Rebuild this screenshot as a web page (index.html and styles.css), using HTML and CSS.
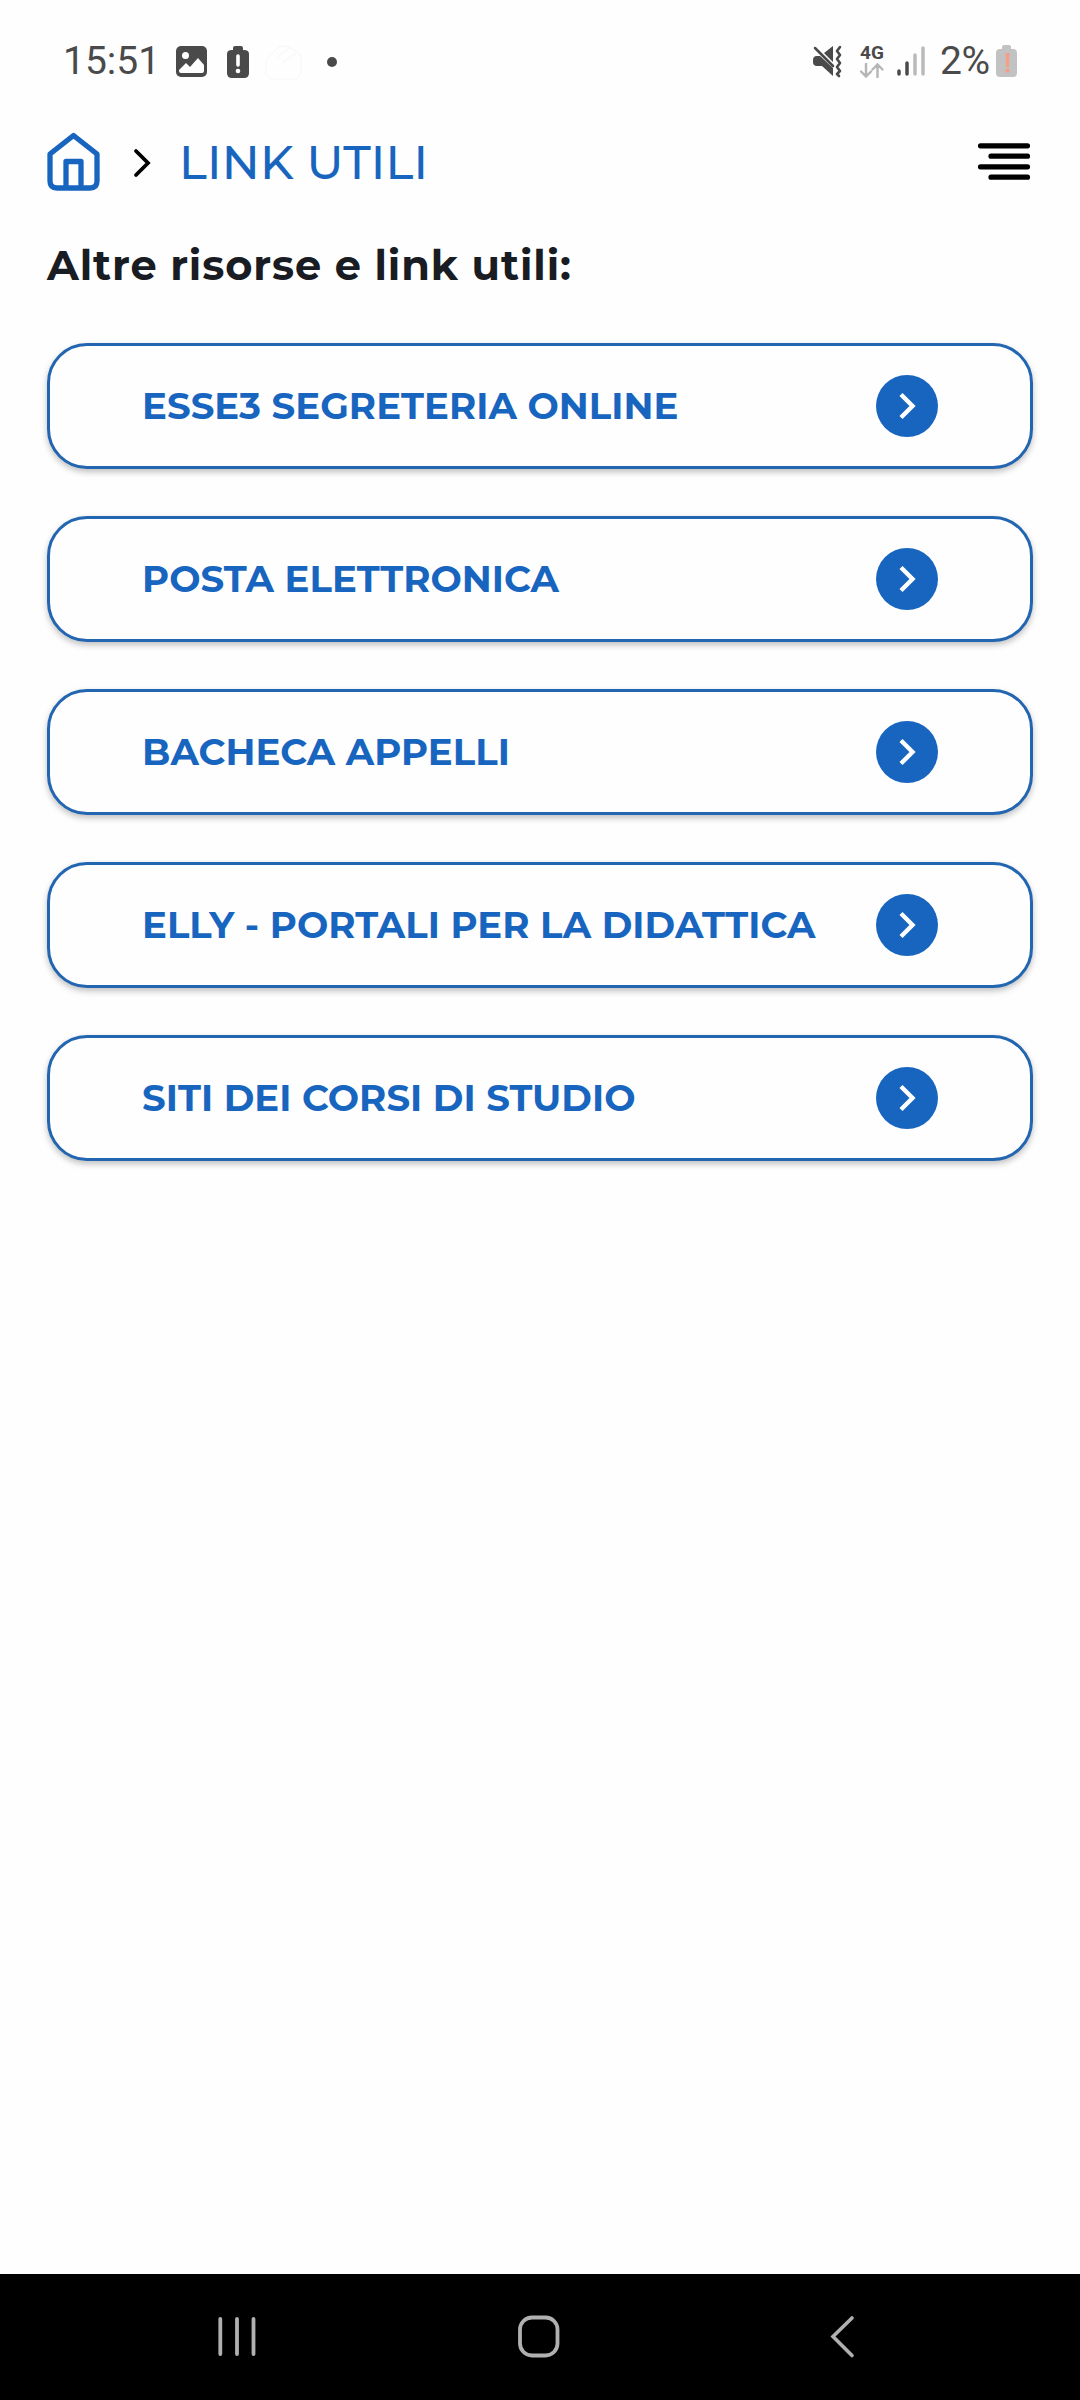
FILE: index.html
```html
<!DOCTYPE html>
<html lang="it">
<head>
    <meta charset="UTF-8">
    <meta name="viewport" content="width=device-width, initial-scale=1.0">
    <title>Link utili</title>
    <link rel="stylesheet" href="styles.css">
</head>
<body>
    <div class="status-bar">
        <span class="clock">15:51</span>
        <svg class="notifications" width="180" height="40" viewBox="0 0 180 40">
            <rect x="1" y="5" width="31" height="31" rx="5" fill="#4a4a4a"/>
            <circle cx="10.5" cy="14.5" r="3.5" fill="#fff"/>
            <path d="M4 29l7-7 4 4 8-9 6 7v6q0 2-2 2H6q-2 0-2-2z" fill="#fff"/>
            <path d="M58 7q0-2 2-2h6q2 0 2 2v2h1q5 0 5 4v19q0 5-5 5H57q-5 0-5-5V13q0-4 5-4h1z" fill="#4a4a4a"/>
            <path d="M63 15v9" stroke="#fff" stroke-width="3.6" stroke-linecap="round"/>
            <circle cx="63" cy="30" r="2.3" fill="#fff"/>
            <path d="M91 19l13-13q6-2 10 0l12 8v19l-5 5H96l-5-5zM101 17l13-10M107 22l14-10" fill="none" stroke="#f3f7f5"/>
            <circle cx="157" cy="21" r="5" fill="#4a4a4a"/>
        </svg>
        <svg class="mute" width="31" height="34" viewBox="0 0 31 34">
            <path d="M12 9l9-7v16zM1 16q0-4 4-4h3l13 12v8L10 22H5q-4 0-4-4z" fill="#4a4a4a"/>
            <path d="M3 4l18 18" stroke="#4a4a4a" stroke-width="2.5" stroke-linecap="round"/>
            <path d="M28 3l-3 4 3 4-3 4 3 4-3 4 3 4-3 3 2 2" fill="none" stroke="#4a4a4a" stroke-width="2.6" stroke-linecap="round" stroke-linejoin="round"/>
        </svg>
        <div class="network">
            <span>4G</span>
            <svg width="24" height="15" viewBox="0 0 24 15">
                <path d="M6 1v12M1 8.5l5 5 5-5M17.5 14V2M12.5 6.5l5-5 5 5" fill="none" stroke="#b5b5b5" stroke-width="2.4" stroke-linecap="round"/>
            </svg>
        </div>
        <svg class="signal" width="28" height="32" viewBox="0 0 28 32">
            <path d="M2 26v3M10 18v11" stroke="#4a4a4a" stroke-width="3.5" stroke-linecap="round"/>
            <path d="M18 10v19M26 3v26" stroke="#bababa" stroke-width="3.5" stroke-linecap="round"/>
        </svg>
        <span class="percent">2%</span>
        <svg class="battery" width="22" height="34" viewBox="0 0 22 34">
            <path d="M6 5V3q0-2 2-2h5q2 0 2 2v2h2q4 0 4 4v20q0 4-4 4H4q-4 0-4-4V9q0-4 4-4z" fill="#c2c2c2"/>
            <path d="M9.500 9h4l-.5 14h-3z" fill="#f4a088"/>
            <circle cx="11.5" cy="26.500" r="2.2" fill="#f4a088"/>
        </svg>
    </div>

    <header class="header">
        <svg class="home-icon" width="54" height="60" viewBox="0 0 54 60">
            <path d="M3 22L26.500 3.500 50 22v27q0 7-7 7H10q-7 0-7-7zM19 56V29.500h15V56" fill="none" stroke="#1865c0" stroke-width="5.3" stroke-linejoin="round"/>
        </svg>
        <svg class="crumb-arrow" width="18" height="30" viewBox="0 0 18 30">
            <path d="M3 3l12 12L3 27" fill="none" stroke="#000" stroke-width="3.8" stroke-linecap="round"/>
        </svg>
        <span class="crumb">LINK UTILI</span>
        <svg class="menu-icon" width="54" height="40" viewBox="0 0 54 40">
            <path d="M3.500 3.800h47M14 14.200h36.500M3.500 24.800h47M14 35.200h36.500" stroke="#000" stroke-width="5.2" stroke-linecap="round"/>
        </svg>
    </header>

    <main>
        <h1>Altre risorse e link utili:</h1>
        <div class="links">
            <a class="link-card">
                <span>ESSE3 SEGRETERIA ONLINE</span>
                <svg width="62" height="62" viewBox="0 0 62 62"><circle cx="31" cy="31" r="31"/><path d="M25 19.5L36.500 31 25 42.5"/></svg>
            </a>
            <a class="link-card">
                <span>POSTA ELETTRONICA</span>
                <svg width="62" height="62" viewBox="0 0 62 62"><circle cx="31" cy="31" r="31"/><path d="M25 19.5L36.500 31 25 42.5"/></svg>
            </a>
            <a class="link-card">
                <span>BACHECA APPELLI</span>
                <svg width="62" height="62" viewBox="0 0 62 62"><circle cx="31" cy="31" r="31"/><path d="M25 19.5L36.500 31 25 42.5"/></svg>
            </a>
            <a class="link-card">
                <span>ELLY - PORTALI PER LA DIDATTICA</span>
                <svg width="62" height="62" viewBox="0 0 62 62"><circle cx="31" cy="31" r="31"/><path d="M25 19.5L36.500 31 25 42.5"/></svg>
            </a>
            <a class="link-card">
                <span>SITI DEI CORSI DI STUDIO</span>
                <svg width="62" height="62" viewBox="0 0 62 62"><circle cx="31" cy="31" r="31"/><path d="M25 19.5L36.500 31 25 42.5"/></svg>
            </a>
        </div>
    </main>

    <nav class="nav-bar">
        <svg width="44" height="44" viewBox="0 0 44 44"><path d="M5.3 4v35M22 4v35M38.500 4v35" stroke-width="3.8"/></svg>
        <svg width="44" height="44" viewBox="0 0 44 44"><rect x="2" y="2.500" width="37.5" height="38" rx="12" stroke-width="3.8"/></svg>
        <svg width="44" height="44" viewBox="0 0 44 44"><path d="M31 3L12 21.500l19 19" stroke-width="3.6"/></svg>
    </nav>
</body>
</html>
```

FILE: styles.css
```css
* {
    box-sizing: border-box;
}

body {
    margin: 0;
    height: 2400px;
    display: flex;
    flex-direction: column;
    background-color: #fefefe;
    font-family: Montserrat, Inter, sans-serif;
}

svg {
    display: block;
    flex-shrink: 0;
}

.status-bar {
    height: 120px;
    padding: 1px 62px 0 63px;
    display: flex;
    align-items: center;
    font-family: Roboto, sans-serif;
    color: #4a4a4a;
}

.clock, .percent {
    font-size: 39px;
    line-height: 40px;
}

.clock {
    width: 112px;
}

.mute {
    margin-left: auto;
    margin-right: 17px;
}

.network {
    width: 25px;
    height: 34px;
    margin-right: 12px;
    display: flex;
    flex-direction: column;
    justify-content: space-between;
}

.network span {
    font-size: 19px;
    font-weight: 700;
    line-height: 17px;
}

.signal {
    margin-right: 15px;
}

.percent {
    width: 56px;
    letter-spacing: -0.4px;
}

.header {
    height: 84px;
    padding: 0 49px 0 47px;
    display: flex;
    align-items: center;
}

.home-icon {
    margin-right: 32px;
}

.crumb-arrow {
    margin-top: 2px;
}

.crumb {
    margin-left: 28px;
    padding-top: 2px;
    font-size: 46.8px;
    line-height: 54px;
    font-weight: 500;
    letter-spacing: 0.2px;
    color: #1865c0;
}

.menu-icon {
    margin-left: auto;
}

main {
    flex: 1;
    padding: 0 47px;
}

h1 {
    margin: 36px 0 53px;
    font-size: 41.5px;
    line-height: 50px;
    font-weight: 700;
    letter-spacing: 0.9px;
    color: #191c22;
}

.links {
    display: flex;
    flex-direction: column;
    gap: 47px;
}

.link-card {
    height: 126px;
    padding: 0 92px;
    display: flex;
    align-items: center;
    justify-content: space-between;
    border: 3px solid #2265b0;
    border-radius: 40px;
    background-color: #fefefe;
    box-shadow: 0 3px 6px rgba(0, 0, 0, 0.25);
    font-size: 37.1px;
    font-weight: 700;
    line-height: 44px;
    letter-spacing: 0.05px;
    white-space: nowrap;
    color: #1865c0;
}

.link-card circle {
    fill: #1865c0;
}

.link-card path {
    fill: none;
    stroke: #fff;
    stroke-width: 4.4;
}

.nav-bar {
    height: 126px;
    padding: 0 215px;
    display: flex;
    align-items: center;
    justify-content: space-between;
    background-color: #000;
}

.nav-bar svg {
    fill: none;
    stroke: #b0b0b0;
    stroke-linecap: round;
}
```
